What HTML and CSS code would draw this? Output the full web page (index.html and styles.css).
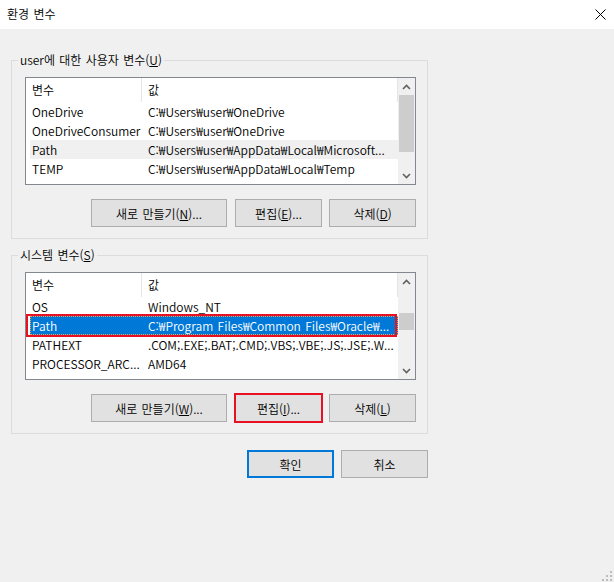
FILE: index.html
```html
<!DOCTYPE html>
<html lang="ko">
<head>
    <meta charset="UTF-8" />
    <title>환경 변수</title>
    <link rel="stylesheet" href="styles.css">
</head>
<body>
    <div class="dialog">
        <div class="titlebar">
            <span class="title">환경 변수</span>
            <svg class="close" width="11" height="11" viewBox="0 0 11 11">
                <path d="M0.5 0.5 L10.5 10.5 M10.5 0.5 L0.5 10.5" stroke="#000" stroke-width="1" fill="none" />
            </svg>
        </div>

        <fieldset class="group">
            <legend>user에 대한 사용자 변수(<u>U</u>)</legend>
            <div class="group-body">
                <div class="listview">
                    <div class="list-body">
                        <div class="list-header">
                            <div class="col-name">변수</div>
                            <div class="col-value">값</div>
                        </div>
                        <div class="row"><div class="col-name">OneDrive</div><div class="col-value">C:₩Users₩user₩OneDrive</div></div>
                        <div class="row"><div class="col-name">OneDriveConsumer</div><div class="col-value">C:₩Users₩user₩OneDrive</div></div>
                        <div class="row hover"><div class="col-name">Path</div><div class="col-value">C:₩Users₩user₩AppData₩Local₩Microsoft...</div></div>
                        <div class="row"><div class="col-name">TEMP</div><div class="col-value">C:₩Users₩user₩AppData₩Local₩Temp</div></div>
                    </div>
                    <div class="scrollbar">
                        <div class="scroll-arrow">
                            <svg width="9" height="6" viewBox="0 0 9 6"><path d="M1 5 L4.5 1.5 L8 5" stroke="#606060" stroke-width="1.6" fill="none" /></svg>
                        </div>
                        <div class="scroll-track"><div class="thumb thumb-user"></div></div>
                        <div class="scroll-arrow">
                            <svg width="9" height="6" viewBox="0 0 9 6"><path d="M1 1 L4.5 4.5 L8 1" stroke="#606060" stroke-width="1.6" fill="none" /></svg>
                        </div>
                    </div>
                </div>
                <div class="buttons">
                    <button class="btn btn-wide">새로 만들기(<u>N</u>)...</button>
                    <button class="btn">편집(<u>E</u>)...</button>
                    <button class="btn">삭제(<u>D</u>)</button>
                </div>
            </div>
        </fieldset>

        <fieldset class="group">
            <legend>시스템 변수(<u>S</u>)</legend>
            <div class="group-body">
                <div class="listview">
                    <div class="list-body">
                        <div class="list-header">
                            <div class="col-name">변수</div>
                            <div class="col-value">값</div>
                        </div>
                        <div class="row"><div class="col-name">OS</div><div class="col-value">Windows_NT</div></div>
                        <div class="row selected"><div class="col-name">Path</div><div class="col-value">C:₩Program Files₩Common Files₩Oracle₩...</div></div>
                        <div class="row"><div class="col-name">PATHEXT</div><div class="col-value">.COM;.EXE;.BAT;.CMD;.VBS;.VBE;.JS;.JSE;.W...</div></div>
                        <div class="row"><div class="col-name">PROCESSOR_ARC...</div><div class="col-value">AMD64</div></div>
                    </div>
                    <div class="scrollbar">
                        <div class="scroll-arrow">
                            <svg width="9" height="6" viewBox="0 0 9 6"><path d="M1 5 L4.5 1.5 L8 5" stroke="#606060" stroke-width="1.6" fill="none" /></svg>
                        </div>
                        <div class="scroll-track"><div class="thumb thumb-system"></div></div>
                        <div class="scroll-arrow">
                            <svg width="9" height="6" viewBox="0 0 9 6"><path d="M1 1 L4.5 4.5 L8 1" stroke="#606060" stroke-width="1.6" fill="none" /></svg>
                        </div>
                    </div>
                </div>
                <div class="buttons">
                    <button class="btn btn-wide">새로 만들기(<u>W</u>)...</button>
                    <button class="btn btn-marked">편집(<u>I</u>)...</button>
                    <button class="btn">삭제(<u>L</u>)</button>
                </div>
            </div>
        </fieldset>

        <div class="dialog-buttons">
            <button class="btn btn-default">확인</button>
            <button class="btn">취소</button>
        </div>

        <svg class="grip" width="10" height="10" viewBox="0 0 10 10">
            <rect x="8" y="0" width="2" height="2" fill="#bcbcbc" />
            <rect x="4" y="4" width="2" height="2" fill="#bcbcbc" />
            <rect x="8" y="4" width="2" height="2" fill="#bcbcbc" />
            <rect x="0" y="8" width="2" height="2" fill="#bcbcbc" />
            <rect x="4" y="8" width="2" height="2" fill="#bcbcbc" />
            <rect x="8" y="8" width="2" height="2" fill="#bcbcbc" />
        </svg>
    </div>
</body>
</html>
```

FILE: styles.css
```css
* {
    box-sizing: border-box;
}

body {
    margin: 0;
    font-family: "Noto Sans CJK KR", sans-serif;
    font-size: 12px;
    font-weight: 350;
    word-spacing: 1px;
    color: #000;
    background: #f0f0f0;
}

.dialog {
    width: 614px;
    height: 582px;
    display: flex;
    flex-direction: column;
    background: #f0f0f0;
}

.titlebar {
    height: 29px;
    flex-shrink: 0;
    background: #fff;
    display: flex;
    align-items: center;
    justify-content: space-between;
    padding: 0 8px 1px 7px;
}

.title {
    line-height: 16px;
}

/* group boxes */
.group {
    margin: 23px 0 0 11px;
    width: 417px;
    min-width: 0;
    padding: 0;
    border: 1px solid #dcdcdc;
}

    .group + .group {
        margin-top: 8px;
    }

    .group legend {
        margin-left: 6px;
        padding: 0 2px;
        line-height: 16px;
    }

.group-body {
    padding: 9px 11px 11px 13px;
}

/* list view */
.listview {
    height: 108px;
    border: 1px solid #828790;
    background: #fff;
    display: flex;
}

.list-body {
    flex: 1;
    min-width: 0;
    overflow: hidden;
}

.list-header {
    display: flex;
    height: 24px;
    line-height: 24px;
}

    .list-header .col-name {
        width: 116px;
        padding-left: 6px;
        border-right: 1px solid #e5e5e5;
    }

    .list-header .col-value {
        flex: 1;
        padding-left: 6px;
        border-right: 1px solid #e5e5e5;
    }

.row {
    display: flex;
    height: 19px;
    line-height: 19px;
    margin-left: 4px;
    white-space: nowrap;
}

    .row .col-name {
        width: 112px;
        padding-left: 2px;
        overflow: hidden;
    }

    .row .col-value {
        flex: 1;
        min-width: 0;
        padding: 0 4px 0 6px;
        overflow: hidden;
    }

    .row.hover {
        background: #f0f0f0;
    }

    .row.selected {
        position: relative;
        background: #0078d7;
        color: #fff;
        outline: 1px dotted #f6a04d;
        outline-offset: -1px;
    }

        .row.selected::after {
            content: "";
            position: absolute;
            left: -4px;
            right: 1px;
            top: -2px;
            bottom: -2px;
            border: 2px solid #e81123;
        }

.scrollbar {
    width: 17px;
    flex-shrink: 0;
    background: #f0f0f0;
    display: flex;
    flex-direction: column;
}

.scroll-arrow {
    height: 17px;
    display: flex;
    align-items: center;
    justify-content: center;
}

.scroll-track {
    flex: 1;
    padding: 0 1px;
}

.thumb {
    background: #cdcdcd;
}

.thumb-user {
    height: 57px;
}

.thumb-system {
    margin-top: 23px;
    height: 17px;
}

/* buttons */
.buttons {
    display: flex;
    justify-content: flex-end;
    gap: 7px;
    margin-top: 14px;
}

.btn {
    width: 87px;
    height: 28px;
    padding: 0;
    border: 1px solid #adadad;
    background: #e1e1e1;
    font: inherit;
    word-spacing: inherit;
    color: #000;
}

.btn-wide {
    width: 136px;
    margin-right: 1px;
}

.btn-marked {
    outline: 2px solid #e81123;
    outline-offset: -1px;
}

.btn-default {
    border: 2px solid #0078d7;
}

.dialog-buttons {
    display: flex;
    justify-content: flex-end;
    gap: 7px;
    width: 417px;
    margin: 16px 0 0 11px;
}

.grip {
    margin: auto 2px 1px 0;
    align-self: flex-end;
}
```
